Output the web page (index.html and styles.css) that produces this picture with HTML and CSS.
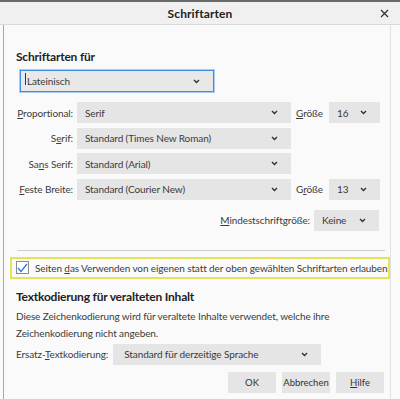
FILE: index.html
```html
<!DOCTYPE html>
<html lang="de">
<head>
    <meta charset="UTF-8">
    <meta name="viewport" content="width=device-width, initial-scale=1.0">
    <title>Schriftarten</title>
    <link rel="stylesheet" href="styles.css">
</head>
<body>
    <div class="titlebar">
        <span class="title">Schriftarten</span>
        <svg class="close" width="9" height="9" viewBox="0 0 9 9"><path d="M1 1 L8 8 M8 1 L1 8" stroke="#333" stroke-width="1.3"/></svg>
    </div>
    <div class="dialog">
        <h2 class="heading">Schriftarten für</h2>
        <div class="select lang focused">
            <span class="caret"></span>Lateinisch
            <svg class="chev" width="7" height="5" viewBox="0 0 7 5"><path d="M1 1 L3.5 3.5 L6 1" fill="none" stroke="#333" stroke-width="1.4"/></svg>
        </div>

        <div class="font-grid">
            <label class="lbl"><u>P</u>roportional:</label>
            <div class="select">Serif
                <svg class="chev" width="7" height="5" viewBox="0 0 7 5"><path d="M1 1 L3.5 3.5 L6 1" fill="none" stroke="#333" stroke-width="1.4"/></svg>
            </div>
            <label class="size-lbl"><u>G</u>röße</label>
            <div class="select small">16
                <svg class="chev" width="7" height="5" viewBox="0 0 7 5"><path d="M1 1 L3.5 3.5 L6 1" fill="none" stroke="#333" stroke-width="1.4"/></svg>
            </div>

            <label class="lbl">S<u>e</u>rif:</label>
            <div class="select">Standard (Times New Roman)
                <svg class="chev" width="7" height="5" viewBox="0 0 7 5"><path d="M1 1 L3.5 3.5 L6 1" fill="none" stroke="#333" stroke-width="1.4"/></svg>
            </div>
            <span></span><span></span>

            <label class="lbl">Sa<u>n</u>s Serif:</label>
            <div class="select">Standard (Arial)
                <svg class="chev" width="7" height="5" viewBox="0 0 7 5"><path d="M1 1 L3.5 3.5 L6 1" fill="none" stroke="#333" stroke-width="1.4"/></svg>
            </div>
            <span></span><span></span>

            <label class="lbl"><u>F</u>este Breite:</label>
            <div class="select">Standard (Courier New)
                <svg class="chev" width="7" height="5" viewBox="0 0 7 5"><path d="M1 1 L3.5 3.5 L6 1" fill="none" stroke="#333" stroke-width="1.4"/></svg>
            </div>
            <label class="size-lbl">G<u>r</u>öße</label>
            <div class="select small">13
                <svg class="chev" width="7" height="5" viewBox="0 0 7 5"><path d="M1 1 L3.5 3.5 L6 1" fill="none" stroke="#333" stroke-width="1.4"/></svg>
            </div>
        </div>

        <div class="min-row">
            <label><u>M</u>indestschriftgröße:</label>
            <div class="select min">Keine
                <svg class="chev" width="7" height="5" viewBox="0 0 7 5"><path d="M1 1 L3.5 3.5 L6 1" fill="none" stroke="#333" stroke-width="1.4"/></svg>
            </div>
        </div>

        <div class="separator"></div>

        <div class="highlight">
            <span class="checkbox">
                <svg width="11" height="10" viewBox="0 0 11 10"><path d="M1 5 L4 8.5 L10 1" fill="none" stroke="#2a7bd4" stroke-width="1.3"/></svg>
            </span>
            <span>Seiten <u>d</u>as Verwenden von eigenen statt der oben gewählten Schriftarten erlauben</span>
        </div>

        <h2 class="heading second">Textkodierung für veralteten Inhalt</h2>
        <p class="desc">Diese Zeichenkodierung wird für veraltete Inhalte verwendet, welche ihre Zeichenkodierung nicht angeben.</p>

        <div class="enc-row">
            <label>Ersatz-<u>T</u>extkodierung:</label>
            <div class="select enc">Standard für derzeitige Sprache
                <svg class="chev" width="7" height="5" viewBox="0 0 7 5"><path d="M1 1 L3.5 3.5 L6 1" fill="none" stroke="#333" stroke-width="1.4"/></svg>
            </div>
        </div>

        <div class="buttons">
            <button>OK</button>
            <button>Abbrechen</button>
            <button><u>H</u>ilfe</button>
        </div>
    </div>
</body>
</html>
```

FILE: styles.css
```css
body {
    margin: 0;
    padding: 0;
    font-family: Lato, "Noto Sans", sans-serif;
    font-size: 10px;
    letter-spacing: -0.1px;
    color: #3a3a3a;
    background-color: #fafafa;
    height: 399px;
    overflow: hidden;
}

u {
    text-decoration: underline;
    text-underline-offset: 1px;
}

.titlebar {
    position: relative;
    height: 22px;
    border-top: 2px solid #6a6a6a;
    border-bottom: 1px solid #dadada;
    background-color: #f0f0f0;
    display: flex;
    align-items: center;
    justify-content: center;
}

.title {
    font-weight: bold;
    font-size: 12px;
    letter-spacing: 0.1px;
    color: #222;
}

.close {
    position: absolute;
    right: 11px;
    top: 7px;
}

.dialog {
    margin-left: 3px;
    width: 388px;
    height: 374px;
    border-left: 1px solid #a8a8a8;
    border-right: 1px solid #e2e2e2;
    padding: 24px 0 0 12px;
    box-sizing: border-box;
}

.heading {
    margin: 0 0 5px 0;
    font-size: 12px;
    letter-spacing: -0.2px;
    font-weight: bold;
    color: #222;
    line-height: 16px;
}

.select {
    position: relative;
    height: 21px;
    background-color: #e5e5e5;
    display: flex;
    align-items: center;
    padding-left: 8px;
    box-sizing: border-box;
    white-space: nowrap;
}

.chev {
    position: absolute;
    right: 13px;
    top: 8px;
}

.lang {
    width: 194px;
    height: 22px;
    margin-left: 4px;
    border: 1px solid #3b8ee0;
    box-shadow: 0 0 0 1px #a9cdf1;
    background-color: #e8e8e8;
    padding-left: 7px;
}

.caret {
    display: inline-block;
    width: 1px;
    height: 12px;
    background-color: #333;
    margin-right: 1px;
    margin-left: -3px;
    align-self: flex-start;
    margin-top: 2px;
}

.font-grid {
    display: grid;
    grid-template-columns: 57px 214px 30px 51px;
    column-gap: 4px;
    row-gap: 4.5px;
    margin-top: 10px;
    align-items: center;
}

.lbl {
    text-align: right;
    white-space: nowrap;
}

.size-lbl {
    padding-left: 1px;
}

.min-row {
    display: flex;
    justify-content: flex-end;
    align-items: center;
    gap: 4px;
    width: 363px;
    margin-top: 10px;
}

.min {
    width: 65px;
}

.separator {
    width: 368px;
    margin-top: 19px;
    margin-left: 1px;
    border-top: 1px solid #cfcfcf;
}

.highlight {
    display: flex;
    align-items: center;
    gap: 6px;
    width: 380px;
    height: 22px;
    margin: 6px 0 0 -6px;
    padding-left: 4px;
    border: 2px solid #e3e35a;
    box-sizing: border-box;
    white-space: nowrap;
}

.checkbox {
    width: 13px;
    height: 13px;
    border: 1px solid #8a8a8a;
    background-color: #fff;
    box-sizing: border-box;
    display: flex;
    align-items: center;
    justify-content: center;
}

.second {
    margin-top: 10px;
    margin-bottom: 3px;
}

.desc {
    margin: 0;
    width: 330px;
    line-height: 17px;
}

.enc-row {
    display: flex;
    align-items: center;
    gap: 5px;
    margin-top: 2px;
}

.enc {
    width: 208px;
    padding-left: 11px;
}

.buttons {
    display: flex;
    justify-content: flex-end;
    gap: 6px;
    width: 368px;
    margin-top: 7px;
}

.buttons button {
    width: 48px;
    height: 21px;
    border: none;
    background-color: #e5e5e5;
    font-family: inherit;
    font-size: 9.5px;
    color: #333;
    padding: 0;
}
```
